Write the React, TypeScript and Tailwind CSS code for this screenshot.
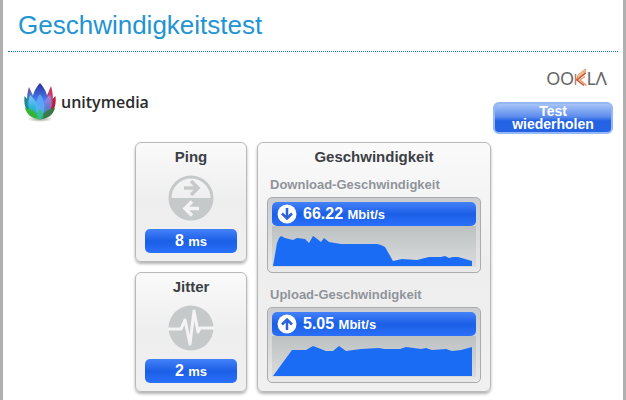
import React from "react";

const downloadPoints =
  "1,40 5,17 7,12 9,10 13,12 21,14 25,12 33,13 37,17 41,10 44,12 49,16 52,12 57,16 69,18 105,18 109,19 113,21 117,28 121,35 130,33 145,34 157,31 169,31 173,30 177,32 181,31 186,31 200,35 200,40";

const uploadPoints =
  "1,40 20,14 34,14 41,10 54,15 61,15 67,10 74,15 89,13 107,12 112,13 128,13 134,11 149,13 154,12 160,14 174,13 180,15 189,14 200,11 200,40";

const LotusLogo = () => (
  <svg viewBox="0 0 34 40" className="h-10 w-[34px]" aria-hidden="true">
    <defs>
      <linearGradient id="petalLeft" x1="0" y1="0" x2="0.6" y2="1">
        <stop offset="0" stopColor="#8a2aa8" />
        <stop offset="0.45" stopColor="#2a9fd0" />
        <stop offset="1" stopColor="#2fae3c" />
      </linearGradient>
      <linearGradient id="petalRight" x1="1" y1="0" x2="0.3" y2="1">
        <stop offset="0" stopColor="#d8203c" />
        <stop offset="0.5" stopColor="#b05a90" />
        <stop offset="1" stopColor="#2c7a38" />
      </linearGradient>
      <linearGradient id="petalMid" x1="0" y1="0" x2="0" y2="1">
        <stop offset="0" stopColor="#2b2f9e" />
        <stop offset="0.5" stopColor="#4b7ff0" />
        <stop offset="1" stopColor="#22c7c0" />
      </linearGradient>
      <linearGradient id="petalFront" x1="0" y1="0" x2="0" y2="1">
        <stop offset="0" stopColor="#8fd0ff" />
        <stop offset="0.5" stopColor="#35b8e6" />
        <stop offset="1" stopColor="#1fae5c" />
      </linearGradient>
      <linearGradient id="petalSide" x1="0" y1="0" x2="0" y2="1">
        <stop offset="0" stopColor="#b08ce8" />
        <stop offset="0.5" stopColor="#6a78d8" />
        <stop offset="1" stopColor="#1f9c6c" />
      </linearGradient>
      <radialGradient id="lotusShade">
        <stop offset="0" stopColor="#4a5a3a" stopOpacity="0.6" />
        <stop offset="1" stopColor="#4a5a3a" stopOpacity="0" />
      </radialGradient>
    </defs>
    <ellipse cx="17" cy="37" rx="13" ry="3" fill="url(#lotusShade)" />
    <path d="M17 36C5 35 0 26 1.500 14C5 17 12 26 17 36Z" fill="#1f8c8c" />
    <path d="M17 36C29 35 34 26 32.500 14C29 17 22 26 17 36Z" fill="#b8203a" />
    <path d="M16 36C4 31 2 18 6 5C9 12 15 22 17 34Z" fill="url(#petalLeft)" />
    <path d="M18 36C30 31 32 18 28 4C25 12 19 22 17 34Z" fill="url(#petalRight)" />
    <path d="M17 36C6 27 7 12 17 1C27 12 28 27 17 36Z" fill="url(#petalMid)" />
    <path d="M16 36C5 32 4 22 7 13C13 18 17 26 17 36Z" fill="url(#petalFront)" opacity="0.85" />
    <path d="M18 36C29 32 30 22 27 13C21 18 17 26 17 36Z" fill="url(#petalSide)" opacity="0.85" />
    <path d="M17 36C11 30 11 20 17 12C23 20 23 30 17 36Z" fill="#5fb4ff" opacity="0.7" />
    <path d="M17 37C9 37 4 33 2 26C9 27 14 31 17 37Z" fill="#35b43a" />
    <path d="M17 37C25 37 30 33 32 26C25 27 20 31 17 37Z" fill="#3a7a48" />
    <path d="M17 38C13 36 12 32 17 27C22 32 21 36 17 38Z" fill="#2fc08a" opacity="0.8" />
  </svg>
);

const OoklaLogo = () => (
  <div className="flex items-end font-['Lato',sans-serif] text-[17px] leading-5 text-[#666]">
    <span>OO</span>
    <svg viewBox="0 0 13 20" className="h-5 w-[13px]" fill="none" aria-hidden="true">
      <path d="M1.500 5V16" stroke="#b9826c" strokeWidth="1.500" />
      <path d="M11.500 0L4 6L2 11L11 5Z" fill="#f0c09c" stroke="#e39a6c" strokeWidth="1" />
      <path d="M11.500 4L3 11L10 16.500" stroke="#c8502e" strokeWidth="1.500" />
      <path d="M11 7.500L6 11L12.500 16.500" stroke="#e39a70" strokeWidth="1.500" />
    </svg>
    <span>LΛ</span>
  </div>
);

const PingIcon = () => (
  <svg viewBox="0 0 46 46" className="size-[46px]" fill="none" aria-hidden="true">
    <circle cx="23" cy="23" r="21" stroke="#c6c9ca" strokeWidth="3" />
    <path d="M1 23A22 22 0 0 0 45 23Z" fill="#c6c9ca" />
    <path d="M16 13H29M23 6L30 13L23 20" stroke="#c6c9ca" strokeWidth="3.500" />
    <path d="M31 33.500H18M24 26.500L17 33.500L24 40.500" stroke="#f4f4f4" strokeWidth="3.500" />
  </svg>
);

const JitterIcon = () => (
  <svg viewBox="0 0 46 46" className="size-[46px]" fill="none" aria-hidden="true">
    <circle cx="23" cy="23" r="22.500" fill="#c6c9ca" />
    <path
      d="M0 24H13L17 15L22 39L26 6L30 27L32 23H46"
      stroke="#f4f4f4"
      strokeWidth="3"
      strokeLinejoin="round"
    />
  </svg>
);

const ArrowBadge = ({ up }: { up?: boolean }) => (
  <svg viewBox="0 0 20 20" className="size-5" fill="none" aria-hidden="true">
    <circle cx="10" cy="10" r="9.500" fill="#fff" />
    <path
      d={up ? "M10 16V6M5 10.500L10 5.500L15 10.500" : "M10 4V14M5 9.500L10 14.500L15 9.500"}
      stroke="#2a62dc"
      strokeWidth="2.500"
    />
  </svg>
);

type MetricProps = {
  title: string;
  value: string;
  icon: React.ReactNode;
};

const MetricCard = ({ title, value, icon }: MetricProps) => (
  <section className="flex w-28 flex-col items-center rounded-md border border-[#b9b9b9] bg-linear-to-b from-[#fafafa] via-[#eeeeee] to-[#f0f0f0] px-[9px] pt-1 pb-2 shadow-[0_2px_3px_rgba(0,0,0,0.3)]">
    <h2 className="text-[15px] leading-5 font-bold text-[#3c3f45]">{title}</h2>
    <div className="my-2">{icon}</div>
    <p className="h-6 w-full rounded-[5px] bg-linear-to-b from-[#4482fa] via-[#1b5fe6] to-[#2b70fa] text-center text-base leading-6 font-bold text-white">
      {value} <span className="text-[13px]">ms</span>
    </p>
  </section>
);

type SpeedProps = {
  label: string;
  value: string;
  points: string;
  up?: boolean;
};

const SpeedGraph = ({ label, value, points, up }: SpeedProps) => (
  <div>
    <h3 className="pl-[3px] text-[13px] leading-5 font-bold text-[#90949a]">{label}</h3>
    <div className="mt-[2px] rounded-[5px] border border-[#a9abac] bg-linear-to-b from-[#cacccd] to-[#e9e9e9] px-1 pt-1 pb-[5px]">
      <div className="flex h-6 items-center gap-[6px] rounded-[5px] bg-linear-to-b from-[#4482fa] via-[#1b5fe6] to-[#2b70fa] pl-[5px] text-white">
        <ArrowBadge up={up} />
        <p className="text-base leading-6 font-bold">
          {value} <span className="text-[13px]">Mbit/s</span>
        </p>
      </div>
      <svg
        viewBox="0 0 204 41"
        preserveAspectRatio="none"
        className="block h-[41px] w-full bg-linear-to-b from-[#bdc1c2] to-[#dadcdc]"
        aria-hidden="true"
      >
        <polygon points={points} fill="#1a6cf5" />
      </svg>
    </div>
  </div>
);

export default function App() {
  return (
    <div className="min-h-screen border-x-[3px] border-[#b0b0b0] bg-white pb-2 font-['Liberation_Sans',Arial,sans-serif]">
      <header className="mx-[5px] border-b border-dotted border-[#1583b8] px-[10px] pt-[9px] pb-[10px]">
        <h1 className="text-[26px] leading-8 text-[#2294d2]">Geschwindigkeitstest</h1>
      </header>

      <div className="flex items-end justify-between pt-[17px] pr-[10px] pl-5">
        <div className="mb-3 flex items-center gap-1">
          <LotusLogo />
          <span className="font-['Open_Sans',sans-serif] text-base leading-6 font-semibold text-[#2b2b2b]">
            unitymedia
          </span>
        </div>
        <div className="flex flex-col items-end gap-[13px]">
          <div className="pr-[6px]">
            <OoklaLogo />
          </div>
          <button
            type="button"
            className="w-[120px] rounded-md border-2 border-[#94b8f6] bg-linear-to-b from-[#a8c4f8] from-0% via-[#5c8cec] via-45% to-[#2463e4] to-60% px-2 py-px text-sm leading-[13px] font-bold text-white"
          >
            Test wiederholen
          </button>
        </div>
      </div>

      <main className="mt-2 flex justify-center gap-[10px]">
        <div className="flex flex-col gap-[10px]">
          <MetricCard title="Ping" value="8" icon={<PingIcon />} />
          <MetricCard title="Jitter" value="2" icon={<JitterIcon />} />
        </div>
        <section className="w-[234px] rounded-md border border-[#b9b9b9] bg-linear-to-b from-[#fafafa] via-[#eeeeee] to-[#f0f0f0] px-[9px] pt-1 pb-2 shadow-[0_2px_3px_rgba(0,0,0,0.3)]">
          <h2 className="text-center text-[15px] leading-5 font-bold text-[#3c3f45]">Geschwindigkeit</h2>
          <div className="mt-2 flex flex-col gap-3">
            <SpeedGraph label="Download-Geschwindigkeit" value="66.22" points={downloadPoints} />
            <SpeedGraph label="Upload-Geschwindigkeit" value="5.05" points={uploadPoints} up />
          </div>
        </section>
      </main>
    </div>
  );
}
